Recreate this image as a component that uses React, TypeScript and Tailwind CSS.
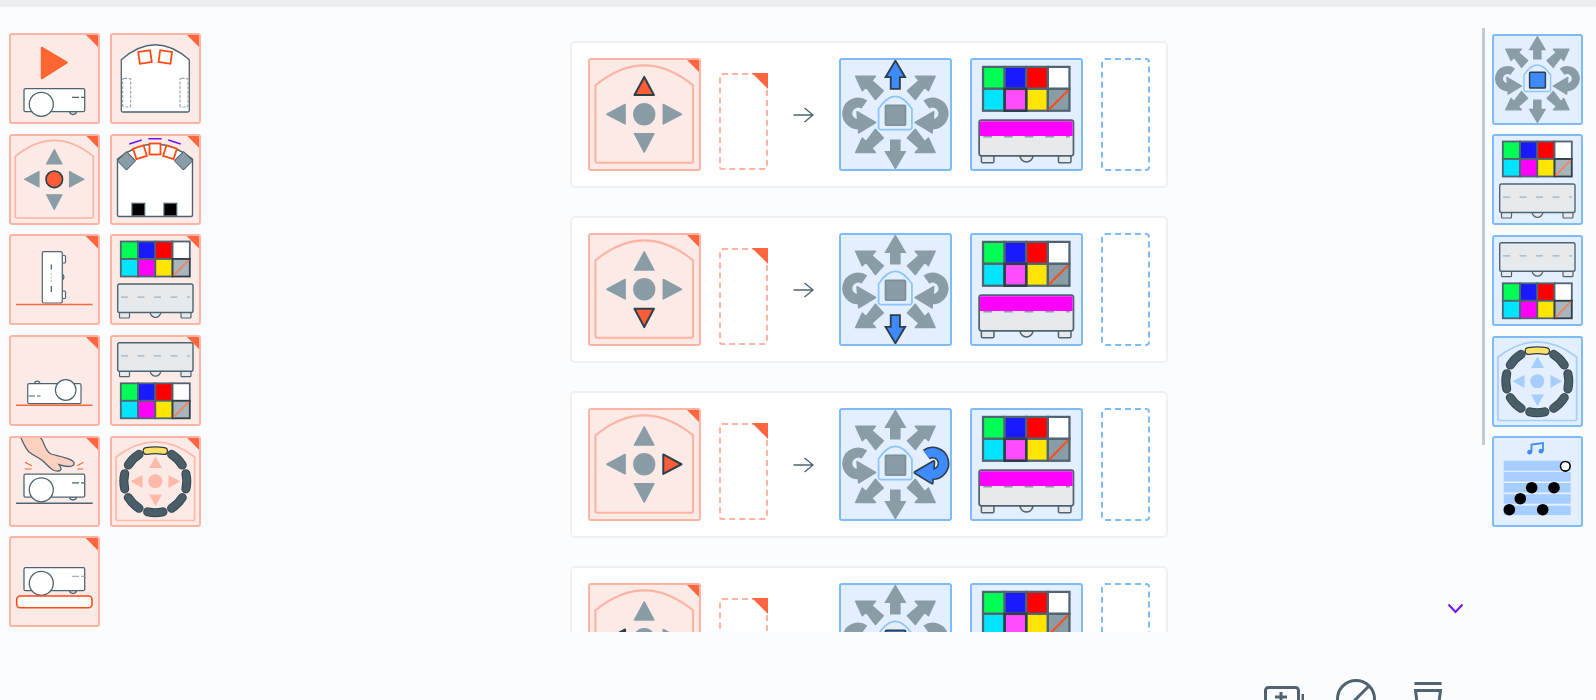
import type { ReactNode } from 'react';

const SLATE = '#4f6470';
const DARK = '#2f3f4a';
const GRAY = '#8a9da7';
const ORANGE = '#ff5c38';
const BLUE = '#3d8bff';

type Tone = 'red' | 'blue';

interface BlockProps {
  tone: Tone;
  big?: boolean;
  corner?: boolean;
  children: ReactNode;
}

// one programming block, the drawing inside uses a 91x91 grid
const Block = ({ tone, big, corner, children }: BlockProps) => (
  <div
    className={`relative shrink-0 box-border border-2 rounded-[3px] overflow-hidden ${big ? 'w-[113px] h-[113px]' : 'w-[91px] h-[91px]'} ${
      tone === 'red' ? 'border-[#ffb3a3] bg-[#fceae6]' : 'border-[#7cbcfb] bg-[#e3effe]'
    }`}
  >
    <svg viewBox="2 2 87 87" className="block w-full h-full">
      {children}
    </svg>
    {corner && <Corner />}
  </div>
);

const Corner = () => (
  <div className="absolute -top-[2px] -right-[2px] w-[16px] h-[16px] bg-[#ff6640] [clip-path:polygon(0_0,100%_0,100%_100%)]" />
);

const Projector = ({ y = 0, dash = SLATE }: { y?: number; dash?: string }) => (
  <g transform={`translate(0 ${y})`} stroke={SLATE} strokeWidth="1.3">
    <path d="M60.5 78.5c0.5 4 6.5 4 7 0z" fill="#fff" />
    <rect x="15" y="55.7" width="60.7" height="23" rx="1.5" fill="#fff" />
    <circle cx="32.3" cy="71.3" r="12" fill="#fff" />
    <path d="M63 64.3h7M72 64.3h3.5" stroke={dash} fill="none" />
  </g>
);

const Play = () => (
  <>
    <path d="M33 15L57.5 29.5L33 45z" fill="#ff6633" stroke="#ff6633" strokeWidth="2.5" strokeLinejoin="round" />
    <Projector />
  </>
);

const RobotTop = () => (
  <>
    <path d="M11.3 26.7Q45.3 -3.3 79.3 26.7V77.5a1.5 1.5 0 0 1 -1.5 1.5H12.8a1.5 1.5 0 0 1 -1.5 -1.5z" fill="#fff" stroke={SLATE} strokeWidth="1.3" />
    <rect x="29" y="18" width="12" height="12" fill="none" stroke="#ff4a14" strokeWidth="1.8" transform="rotate(-8 35 24)" />
    <rect x="49.3" y="18" width="12" height="12" fill="none" stroke="#ff4a14" strokeWidth="1.8" transform="rotate(8 55.3 24)" />
    <rect x="12.7" y="45.3" width="8" height="28.7" rx="1.5" fill="none" stroke="#9aa8b0" strokeWidth="1.2" strokeDasharray="3 1.5" />
    <rect x="70" y="45.3" width="8" height="28.7" rx="1.5" fill="none" stroke="#9aa8b0" strokeWidth="1.2" strokeDasharray="3 1.5" />
  </>
);

const Shield = ({ color, x = 6.3, top = 22.3, apex = 6.3, bottom = 84 }: { color: string; x?: number; top?: number; apex?: number; bottom?: number }) => (
  <path
    d={`M${x} ${top}Q45.3 ${apex * 2 - top} ${90.6 - x} ${top}V${bottom - 1.5}a1.5 1.5 0 0 1 -1.5 1.5H${x + 1.5}a1.5 1.5 0 0 1 -1.5 -1.5z`}
    fill="none"
    stroke={color}
    strokeWidth="1.7"
  />
);

type Dir = 'up' | 'down' | 'left' | 'right' | 'center' | 'none';

const DPad = ({ high = 'none' }: { high?: Dir }) => {
  const paint = (d: Dir) =>
    high === d
      ? { fill: ORANGE, stroke: DARK, strokeWidth: 1.6 }
      : { fill: GRAY, stroke: GRAY, strokeWidth: 1.2 };
  return (
    <>
      <Shield color="#ffb3a3" />
      <path d="M45.3 15.5L37.5 30H53z" strokeLinejoin="round" {...paint('up')} />
      <path d="M45.3 75.5L37.5 60.8H53z" strokeLinejoin="round" {...paint('down')} />
      <path d="M15.5 45.3L30 37.5V53z" strokeLinejoin="round" {...paint('left')} />
      <path d="M75 45.3L60.5 37.5V53z" strokeLinejoin="round" {...paint('right')} />
      <circle cx="45.3" cy="45.3" r="8.3" {...paint('center')} />
    </>
  );
};

const Sensors = () => (
  <>
    <path d="M7.5 25Q45 -5 82.5 25V81a1.5 1.5 0 0 1 -1.5 1.5H9a1.5 1.5 0 0 1 -1.5 -1.5z" fill="#fff" stroke={SLATE} strokeWidth="1.4" />
    <rect x="10" y="20.2" width="13" height="13" rx="0.8" fill={GRAY} stroke={SLATE} strokeWidth="1" transform="rotate(-45 16.5 26.7)" />
    <rect x="67" y="20.2" width="13" height="13" rx="0.8" fill={GRAY} stroke={SLATE} strokeWidth="1" transform="rotate(45 73.5 26.7)" />
    <g fill="#fff" stroke="#ff4a14" strokeWidth="1.8">
      <rect x="24.5" y="12.8" width="11" height="11" transform="rotate(-18 30 18.3)" />
      <rect x="39.5" y="9.5" width="11" height="11" />
      <rect x="54.5" y="12.8" width="11" height="11" transform="rotate(18 60 18.3)" />
    </g>
    <g stroke="#6f13f5" strokeWidth="1.4" fill="none">
      <path d="M19.3 10L31.7 6" />
      <path d="M38.3 4.7H51.7" />
      <path d="M58.3 6L70.7 10" />
    </g>
    <rect x="22" y="69.3" width="12.7" height="12.4" fill="#000" stroke={SLATE} strokeWidth="1.2" />
    <rect x="54" y="69.3" width="12.7" height="12.4" fill="#000" stroke={SLATE} strokeWidth="1.2" />
  </>
);

const Upright = () => (
  <>
    <g fill="#fff" stroke={SLATE} strokeWidth="1.2">
      <rect x="53" y="21.5" width="3.5" height="7.5" rx="1" />
      <rect x="53" y="57" width="3.5" height="7.5" rx="1" />
      <path d="M53 40.5c2.5 0 2.5 5 0 5z" />
      <rect x="33.3" y="17.7" width="20" height="51.3" rx="1.5" />
    </g>
    <path d="M42.3 30.5v5" stroke={SLATE} strokeWidth="1.3" />
    <path d="M42.3 39v10" stroke="#b5c0c6" strokeWidth="1" strokeDasharray="2 1.5" />
    <path d="M42.3 52v6" stroke={SLATE} strokeWidth="1.3" />
    <path d="M7 70.5H83.7" stroke="#ff6640" strokeWidth="1.5" />
  </>
);

const COLORS = ['#00ff55', '#1a1aff', '#ff0000', '#ffffff', '#00e5ff', '#ff00ff', '#ffe600'];

const Grid = ({ y = 7.5, pick = 7 }: { y?: number; pick?: number }) => {
  const w = 17.25;
  const h = 17.5;
  const cell = (i: number) => ({ x: 10.8 + (i % 4) * w, y: y + (i > 3 ? h : 0) });
  return (
    <g strokeWidth="1.8">
      {COLORS.map((c, i) => (
        <rect key={i} {...cell(i)} width={w} height={h} fill={i === 5 && pick === 5 ? '#ff4dff' : c} stroke={SLATE} />
      ))}
      <rect {...cell(7)} width={w} height={h} fill={pick === 7 ? '#aab5bb' : GRAY} stroke={pick === 7 ? DARK : SLATE} />
      <path
        d={`M${10.8 + 3 * w + 1} ${y + 2 * h - 1}L${10.8 + 4 * w - 1} ${y + h + 1}`}
        stroke={pick === 7 ? '#ff7a50' : '#ff4a14'}
        strokeWidth="1.5"
      />
      {pick === 5 && <rect {...cell(5)} width={w} height={h} fill="none" stroke={DARK} strokeWidth="2" />}
    </g>
  );
};

const Box = ({ y = 50, strip = false }: { y?: number; strip?: boolean }) => (
  <g stroke={SLATE} strokeWidth="1.2">
    <rect x="9.5" y={y + 27} width="10" height="7" rx="1" fill="#e7eaed" />
    <rect x="71" y={y + 27} width="10" height="7" rx="1" fill="#e7eaed" />
    <path d={`M40 ${y + 28.5}c2 6.5 9 6.5 11 0z`} fill="#e7eaed" />
    <rect x="7.7" y={y} width="75.3" height={28.5} rx="1.8" fill="#e7eaed" strokeWidth="1.4" />
    {strip && <path d={`M8.4 ${y + 1.8}a1 1 0 0 1 1 -1H81.3a1 1 0 0 1 1 1V${y + 12.6}H8.4z`} fill="#ff00ff" stroke="none" />}
    <path
      d={`M11 ${y + 13.2}H80`}
      stroke={strip ? '#8c9ba4' : '#a5b1b8'}
      strokeWidth="1.2"
      strokeDasharray="7 9.5"
      fill="none"
    />
  </g>
);

const GridOverBox = ({ pick = 7, strip = false }: { pick?: number; strip?: boolean }) => (
  <>
    <Grid pick={pick} />
    <Box strip={strip} />
  </>
);

const BoxOverGrid = () => (
  <>
    <Box y={7.7} />
    <Grid y={48.3} />
  </>
);

const Flat = () => (
  <>
    <g stroke={SLATE} strokeWidth="1.2" fill="#fff">
      <path d="M25.5 48.8c0.5 -3.5 5 -3.5 5.5 0z" />
      <rect x="18.7" y="48.7" width="53.3" height="20" rx="1.5" />
      <circle cx="56.7" cy="55" r="10.3" />
    </g>
    <path d="M19.5 61h6.5M28 61h3.5" stroke={SLATE} strokeWidth="1.2" />
    <path d="M7 70.3H83.7" stroke="#ff6640" strokeWidth="1.5" />
  </>
);

const Touch = () => (
  <>
    <Projector y={-17.5} />
    <path d="M7 67.3H83.7" stroke={SLATE} strokeWidth="1.5" />
    <path
      d="M11 0C14 6 16 12 20 16C25 20 31 22 35 26C38 29 41 32 44 34C47 35.5 52 35.5 52 33C52 31 51 30 50 28.7C54 30 60 31 63 30C66 29 66 26 62.7 24.3C56 21 48 20 42 18C38 16 36 11 34.5 7C33.5 4 32 2 30 0z"
      fill="#fdd0c0"
      stroke={SLATE}
      strokeWidth="1.3"
    />
    <g stroke="#ff6640" strokeWidth="1.2">
      <path d="M16 26.3L22.7 29.7M15.7 33H22.7M68.3 29.7L74.3 26.3M68.3 33H74.3" />
    </g>
  </>
);

// ring of 8 buttons, the top one lit
const Ring = ({ tone }: { tone: Tone }) => {
  const c = tone === 'red' ? '#ffb9a8' : '#a5cdfd';
  const arcs = [-135, -90, -45, 0, 45, 90, 135, 180];
  const pt = (deg: number) => {
    const r = 31.5;
    const a = (deg * Math.PI) / 180;
    return `${45.3 + r * Math.cos(a)} ${45.3 + r * Math.sin(a)}`;
  };
  return (
    <>
      <Shield color={c} x={6} top={21} apex={5.8} bottom={84.5} />
      <path d="M45.5 20.5L39 32H52z" fill={c} />
      <path d="M45.5 70L39 58.5H52z" fill={c} />
      <path d="M20.5 45.3L32.5 39V52z" fill={c} />
      <path d="M70 45.3L58.5 39V52z" fill={c} />
      <circle cx="45.3" cy="45.3" r="7" fill={c} />
      {arcs.map((deg) => {
        const d = `M${pt(deg - 14)}A31.5 31.5 0 0 1 ${pt(deg + 14)}`;
        return deg === -90 ? (
          <g key={deg} fill="none" strokeLinecap="round">
            <path d={`M${pt(deg - 16)}Q45.3 13.5 ${pt(deg + 16)}`} stroke={DARK} strokeWidth="8" />
            <path d={`M${pt(deg - 16)}Q45.3 13.5 ${pt(deg + 16)}`} stroke="#ffe066" strokeWidth="5.6" />
          </g>
        ) : (
          <g key={deg} fill="none" strokeLinecap="round">
            <path d={d} stroke="#37474f" strokeWidth="9" />
            <path d={d} stroke="#4a5e69" strokeWidth="7" />
          </g>
        );
      })}
    </>
  );
};

const Plate = () => (
  <>
    <Projector y={-24} dash="#a5b1b8" />
    <rect x="7.7" y="60" width="75.3" height="11.7" rx="3.5" fill="#fff" stroke="#ff4a14" strokeWidth="1.6" />
  </>
);

type Move = 'up' | 'down' | 'right' | 'center' | 'none';

const Moves = ({ high = 'none' }: { high?: Move }) => {
  const paint = (lit: boolean) =>
    lit ? { fill: BLUE, stroke: DARK, strokeWidth: 1.5 } : { fill: GRAY, stroke: GRAY, strokeWidth: 1.2 };
  const diag = 'M13.7 15H29.5L26.5 18.5L35.8 26.5L29.5 33.5L22 23.5L19 26.5z';
  const curve = 'M20.65 37.64A8.6 8.6 0 1 0 16.5 53.15';
  const head = 'M29.6 51.9L14.8 43.3L16.1 60.2z';
  const lit = high === 'right';
  return (
    <>
      <path d="M45.4 2.5L37.6 15.7H41.7V25H49V15.7H53.2z" {...paint(high === 'up')} />
      <path d="M45.4 88.5L37.6 75.3H41.7V66H49V75.3H53.2z" {...paint(high === 'down')} />
      <path d={diag} strokeLinejoin="round" {...paint(false)} />
      <path d={diag} strokeLinejoin="round" transform="matrix(-1 0 0 1 90.8 0)" {...paint(false)} />
      <path d={diag} strokeLinejoin="round" transform="matrix(1 0 0 -1 0 90.8)" {...paint(false)} />
      <path d={diag} strokeLinejoin="round" transform="matrix(-1 0 0 -1 90.8 90.8)" {...paint(false)} />
      <path d={curve} fill="none" stroke={GRAY} strokeWidth="8" />
      <path d={head} strokeLinejoin="round" {...paint(false)} />
      <g transform="matrix(-1 0 0 1 90.8 0)">
        {lit && (
          <>
            <path d={curve} fill="none" stroke={DARK} strokeWidth="9.5" />
            <path d={head} fill={DARK} stroke={DARK} strokeWidth="2.6" strokeLinejoin="round" />
          </>
        )}
        <path d={curve} fill="none" stroke={lit ? BLUE : GRAY} strokeWidth={lit ? 7 : 8} />
        <path d={head} fill={lit ? BLUE : GRAY} stroke={lit ? 'none' : GRAY} strokeWidth="1.2" strokeLinejoin="round" />
      </g>
      <path d="M32 41Q45.3 21 58.6 41V56a1.5 1.5 0 0 1 -1.5 1.5H33.5a1.5 1.5 0 0 1 -1.5 -1.5z" fill="#e3effe" stroke="#8cc4fb" strokeWidth="1.4" />
      <rect
        x="37.6"
        y="38.2"
        width="15.8"
        height="15.8"
        rx="0.8"
        fill={high === 'center' ? BLUE : GRAY}
        stroke={high === 'center' ? DARK : '#7c919b'}
        strokeWidth="1.5"
      />
    </>
  );
};

const Music = () => (
  <>
    <path d="M39.5 16V8.5L51 7V15" fill="none" stroke={BLUE} strokeWidth="1.8" />
    <circle cx="37.6" cy="16.2" r="2.4" fill={BLUE} />
    <circle cx="49" cy="15.2" r="2.4" fill={BLUE} />
    <g fill="#a5cdfd">
      <rect x="11.7" y="24.7" width="67" height="10" />
      <rect x="11.7" y="36" width="67" height="9.4" />
      <rect x="11.7" y="47" width="67" height="9.4" />
      <rect x="11.7" y="58.3" width="67" height="9.4" />
      <rect x="11.7" y="69.7" width="67" height="9.4" />
    </g>
    <circle cx="39.7" cy="51.7" r="5.8" fill="#000" />
    <circle cx="62" cy="51.7" r="5.8" fill="#000" />
    <circle cx="28.3" cy="62.7" r="5.8" fill="#000" />
    <circle cx="17.3" cy="73.7" r="5.8" fill="#000" />
    <circle cx="50.7" cy="73.7" r="5.8" fill="#000" />
    <circle cx="73.3" cy="30.3" r="4.8" fill="#fff" stroke="#000" strokeWidth="1.6" />
  </>
);

const palette = [
  <Play />,
  <RobotTop />,
  <DPad high="center" />,
  <Sensors />,
  <Upright />,
  <GridOverBox />,
  <Flat />,
  <BoxOverGrid />,
  <Touch />,
  <Ring tone="red" />,
  <Plate />,
];

const rows: { press: Dir; move: Move }[] = [
  { press: 'up', move: 'up' },
  { press: 'down', move: 'down' },
  { press: 'right', move: 'right' },
  { press: 'left', move: 'center' },
];

const side = [
  <Moves high="center" />,
  <GridOverBox />,
  <BoxOverGrid />,
  <Ring tone="blue" />,
  <Music />,
];

const RuleRow = ({ press, move }: { press: Dir; move: Move }) => (
  <div className="flex shrink-0 gap-[18px] w-[598px] h-[147px] box-border border-2 border-[#eef0f2] rounded-[5px] bg-white pt-[15px] pl-[16px]">
    <Block tone="red" big corner>
      <DPad high={press} />
    </Block>
    <div className="relative shrink-0 w-[49px] h-[97px] mt-[15px] box-border border-2 border-dashed border-[#ffb3a3] rounded-[3px] bg-white">
      <Corner />
    </div>
    <div className="flex shrink-0 w-[35px] h-[113px] items-center justify-center">
      <svg width="21" height="16" viewBox="0 0 21 16" fill="none" stroke={SLATE} strokeWidth="1.4">
        <path d="M0.5 8H20M11.5 1L20 8L11.5 15" />
      </svg>
    </div>
    <Block tone="blue" big>
      <Moves high={move} />
    </Block>
    <Block tone="blue" big>
      <GridOverBox pick={5} strip />
    </Block>
    <div className="shrink-0 w-[49px] h-[113px] box-border border-2 border-dashed border-[#7cbcfb] rounded-[4px] bg-white" />
  </div>
);

export default function App() {
  return (
    <div className="relative h-[700px] overflow-hidden bg-[#fbfcfe]">
      <div className="h-[5px] bg-[#eceff1] shadow-[0_1px_3px_rgba(0,0,0,0.12)]" />
      <div className="flex h-[627px]">
        <div className="w-[570px] shrink-0 pl-[9px] pt-[28px]">
          <div className="grid grid-cols-[91px_91px] gap-x-[10px] gap-y-[9.7px]">
            {palette.map((glyph, i) => (
              <Block key={i} tone="red" corner>
                {glyph}
              </Block>
            ))}
          </div>
        </div>
        <div className="flex flex-col w-[598px] shrink-0 gap-[28px] pt-[36px] overflow-hidden">
          {rows.map((row, i) => (
            <RuleRow key={i} press={row.press} move={row.move} />
          ))}
        </div>
        <div className="w-[3px] h-[417px] mt-[23px] ml-[314px] bg-[#c3ccd1]" />
        <div className="flex flex-col gap-[9.7px] ml-[7px] mt-[28.5px]">
          {side.map((glyph, i) => (
            <Block key={i} tone="blue">
              {glyph}
            </Block>
          ))}
        </div>
      </div>
      <svg className="absolute left-[1447px] top-[603px]" width="17" height="11" viewBox="0 0 17 11" fill="none" stroke="#6f13f5" strokeWidth="2">
        <path d="M1.5 1.5L8.5 9L15.5 1.5" />
      </svg>
      <div className="flex items-start pl-[1264px] pt-[47px]">
        <svg className="mt-[7px]" width="40" height="40" viewBox="0 0 40 40" fill="none" stroke={SLATE} strokeWidth="3">
          <rect x="1.5" y="1.5" width="33" height="30" rx="3" />
          <path d="M17 6V18M11 11H23" />
          <path d="M39 8V30" />
        </svg>
        <svg className="ml-[32px]" width="40" height="40" viewBox="0 0 40 40" fill="none" stroke={SLATE} strokeWidth="3">
          <circle cx="20" cy="20" r="18.5" />
          <path d="M7 33L33 7" />
        </svg>
        <svg className="ml-[38px] mt-[3px]" width="28" height="30" viewBox="0 0 28 30" fill="none" stroke={SLATE} strokeWidth="3">
          <path d="M0.5 1.5H27.5" />
          <path d="M1.5 8.5L4 28H24L26.5 8.5Z" />
        </svg>
      </div>
    </div>
  );
}
